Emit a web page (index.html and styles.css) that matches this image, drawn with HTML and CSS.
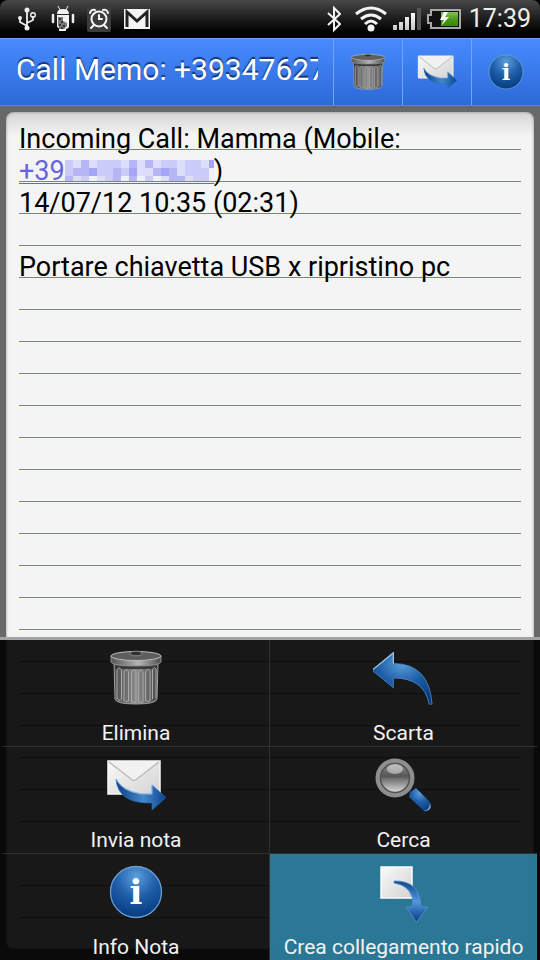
FILE: index.html
```html
<!DOCTYPE html>
<html lang="it">

<head>
  <title>Call Memo</title>
  <meta charset="utf-8">
  <meta name="viewport" content="width=device-width, initial-scale=1">
  <link rel="stylesheet" href="styles.css">
</head>

<body>
  <!-- shared gradients and icons -->
  <svg class="defs" aria-hidden="true">
    <defs>
      <linearGradient id="metal" x1="0" x2="1" y1="0" y2="0">
        <stop offset="0" stop-color="#4a4a4a" />
        <stop offset=".5" stop-color="#8c8c8c" />
        <stop offset="1" stop-color="#4a4a4a" />
      </linearGradient>
      <linearGradient id="rim" x1="0" x2="1" y1="0" y2="0">
        <stop offset="0" stop-color="#555" />
        <stop offset=".55" stop-color="#b5b5b5" />
        <stop offset="1" stop-color="#505050" />
      </linearGradient>
      <linearGradient id="paper" x1="0" x2="1" y1="0" y2="1">
        <stop offset="0" stop-color="#fafafa" />
        <stop offset="1" stop-color="#d2d2d2" />
      </linearGradient>
      <radialGradient id="blue" cx=".5" cy=".2" r=".8">
        <stop offset="0" stop-color="#5a9fdc" />
        <stop offset=".5" stop-color="#1f5ea8" />
        <stop offset="1" stop-color="#053a80" />
      </radialGradient>
      <linearGradient id="swoosh" x1="0" x2="1" y1="0" y2="0">
        <stop offset="0" stop-color="#0b4186" />
        <stop offset=".55" stop-color="#4388cc" />
        <stop offset="1" stop-color="#0b4590" />
      </linearGradient>
      <linearGradient id="drop" x1="0" x2="0" y1="0" y2="1">
        <stop offset="0" stop-color="#10458c" />
        <stop offset=".5" stop-color="#5298da" />
        <stop offset="1" stop-color="#063a85" />
      </linearGradient>
      <linearGradient id="glass" x1="0" x2="0" y1="0" y2="1">
        <stop offset="0" stop-color="#999" />
        <stop offset=".45" stop-color="#555" />
        <stop offset=".55" stop-color="#777" />
        <stop offset="1" stop-color="#f0f0f0" />
      </linearGradient>
      <linearGradient id="bars" x1="0" x2="0" y1="0" y2="1">
        <stop offset="0" stop-color="#fff" />
        <stop offset="1" stop-color="#c4c4c4" />
      </linearGradient>
      <linearGradient id="charge" x1="0" x2="0" y1="0" y2="1">
        <stop offset="0" stop-color="#8cc152" />
        <stop offset=".5" stop-color="#4c9c16" />
        <stop offset="1" stop-color="#3a8408" />
      </linearGradient>
    </defs>

    <symbol id="trash" viewBox="0 0 60 60">
      <path d="M8 15 L9 51 Q10 56 30 56 Q50 56 51 51 L52 15 Z" fill="url(#metal)" stroke="#a2a2a2" stroke-width="1" />
      <path d="M9 15 H51 V21 H9 Z" fill="#3c3c3c" />
      <g fill="none" stroke="#aaa" stroke-width="1">
        <path d="M11 51 V22 Q13 18 15.500 22 V51 Q13 54 11 50" />
        <path d="M18 53 V24 Q20 19 22.500 24 V53 Q20 55 18 52" />
        <path d="M25.500 54 V24 Q27.500 20 30 24 V54 Q28 56 25.500 53" />
        <path d="M32.500 54 V24 Q35 20 37 24 V54 Q35 56 32.500 53" />
        <path d="M39.500 53 V24 Q42 19 44 23 V53 Q42 55 39.500 52" />
        <path d="M46.500 51 V22 Q48 18 50 21 V50" />
      </g>
      <path d="M5 8 V14 Q7 18 30 18 Q53 18 55 14 V8 Z" fill="url(#rim)" stroke="#909090" stroke-width="1" />
      <ellipse cx="30" cy="8" rx="25" ry="4.500" fill="#5e5e5e" stroke="#bdbdbd" stroke-width="1" />
      <ellipse cx="30" cy="5.500" rx="6" ry="2.300" fill="#303030" stroke="#8b8b8b" stroke-width="1" />
    </symbol>

    <symbol id="mail" viewBox="0 0 60 60">
      <path d="M2 6 H54 V39 H2 Z" fill="url(#paper)" stroke="#f6f6f6" stroke-width="1.500" />
      <path d="M3 7 L25 24 Q28 27 31 24 L53 7" fill="#f1f1f1" stroke="#bcbcbc" stroke-width="1.500" />
      <path d="M10 24 Q16 36 35 39 L46 39 V30 L60 42.500 L46 55 V48 Q12 49 10 24 Z" fill="url(#swoosh)" stroke="#2a6cb5" stroke-width=".6" />
      <path d="M10 24 Q16 36 35 39 L46 39 V30" fill="none" stroke="#93bbe2" stroke-width="1" />
    </symbol>

    <symbol id="info" viewBox="0 0 60 60">
      <circle cx="30" cy="30" r="25.500" fill="url(#blue)" stroke="#6c9dd0" stroke-width="1.300" />
      <text x="30" y="42" class="info-letter" text-anchor="middle">i</text>
    </symbol>

    <symbol id="back" viewBox="2 -1 64 60">
      <path d="M1 21 L23 3 V14 Q60 14 63 56 H60 Q55 29 23 29 V39 Z" fill="url(#blue)" stroke="#4f8fca" stroke-width=".8" />
      <path d="M1 21 L23 3 V14" fill="none" stroke="#a4c9e8" stroke-width="1.200" />
    </symbol>

    <symbol id="search" viewBox="1 -1 60 60">
      <path d="M37 36 L43 32 L57 46 Q60 54 52 56 L36 41 Z" fill="url(#blue)" />
      <path d="M50 55 Q57 54 57 47 Q60 55 50 55 Z" fill="#9aa7b8" />
      <circle cx="22" cy="22" r="17" fill="url(#glass)" stroke="#8e8e8e" stroke-width="5" />
      <circle cx="22" cy="22" r="14.500" fill="none" stroke="#505050" stroke-width="1.500" />
      <ellipse cx="22" cy="13" rx="8" ry="5" fill="#fff" opacity=".45" />
    </symbol>

    <symbol id="shortcut" viewBox="2 0 60 60">
      <path d="M9 5 H40 V36 H9 Z" fill="url(#paper)" stroke="#fafafa" stroke-width="1.500" />
      <path d="M22 19 Q48 18 49 45 H56 L44.500 60 L34 45 H41 Q42 24 22 21 Z" fill="url(#drop)" stroke="#5592ce" stroke-width=".8" />
    </symbol>
  </svg>

  <header class="status-bar">
    <div class="status-icons">
      <svg width="20" height="24" viewBox="0 0 20 24" role="img" aria-label="USB">
        <g fill="none" stroke="#eee" stroke-width="1.800">
          <path d="M10 3 V21 M10 19 L3 15 V11 M10 16 L16 13 V9" />
        </g>
        <circle cx="10" cy="3" r="2.500" fill="#eee" />
        <circle cx="10" cy="21" r="2.500" fill="#eee" />
        <circle cx="3" cy="11" r="2" fill="#eee" />
        <circle cx="16" cy="8" r="2.300" fill="none" stroke="#eee" stroke-width="1.400" />
      </svg>
      <svg width="24" height="26" viewBox="0 0 24 26" role="img" aria-label="Debug">
        <path d="M6 8 Q6 3 12 3 Q18 3 18 8 Z M6 9 H18 V21 Q17 23 15 23 V25 H8 V22 Q6 22 6 20 Z" fill="#f2f2f2" />
        <path d="M7 0 L9 4 M17 0 L15 4" stroke="#eee" />
        <path d="M2 9 V16 M22 9 V16" stroke="#eee" stroke-width="2.500" stroke-linecap="round" />
        <path d="M7 11 H12 V15 L16 17 V20 L13 23 H8 V20 H7 Z" fill="#777" />
        <path d="M8 13 h2 M10 16 h2 M8 19 h2 M12 20 h2 M10 22 h2" stroke="#222" stroke-width="1.500" />
      </svg>
      <svg width="24" height="26" viewBox="0 0 24 26" role="img" aria-label="Sveglia">
        <rect width="24" height="26" rx="2" fill="#3c3c3c" />
        <g fill="none" stroke="#f4f4f4" stroke-width="2" stroke-linecap="round">
          <circle cx="12" cy="13" r="7.500" />
          <path d="M12 9 V13 H15 M3 7 Q4 3 8 4 M16 4 Q20 3 21 7 M7 19 L4 22 M17 19 L20 22" />
        </g>
      </svg>
      <svg width="28" height="22" viewBox="0 0 28 22" role="img" aria-label="Gmail">
        <rect x="1" y="1" width="26" height="20" fill="#f4f4f4" />
        <path d="M4 19 V4 L14 13 L24 4 V19" fill="none" stroke="#222" stroke-width="3" />
        <path d="M6 2 H22 L14 9 Z" fill="#f4f4f4" />
      </svg>
    </div>
    <div class="status-system">
      <svg width="14" height="28" viewBox="0 0 14 26" role="img" aria-label="Bluetooth">
        <path d="M1 7 L13 18 L7 24 V2 L13 8 L1 19" fill="none" stroke="#f2f2f2" stroke-width="2" />
      </svg>
      <svg class="wifi" width="32" height="26" viewBox="0 0 32 26" role="img" aria-label="Wi-Fi">
        <g fill="none" stroke="#f4f4f4" stroke-width="3">
          <path d="M1 8 Q16 -4 31 8 M6 13 Q16 5 26 13 M10 18 Q16 12 22 18" />
        </g>
        <circle cx="16" cy="22" r="3.500" fill="#f4f4f4" />
      </svg>
      <svg width="28" height="24" viewBox="0 0 28 24" role="img" aria-label="Segnale">
        <path d="M0 18 h4 v5 h-4 Z M6 15 h4 v8 h-4 Z M12 10 h4 v13 h-4 Z M18 6 h4 v17 h-4 Z" fill="url(#bars)" />
        <path d="M24 1 h4 v22 h-4 Z" fill="#555" />
      </svg>
      <svg width="34" height="20" viewBox="0 0 34 20" role="img" aria-label="Batteria in carica">
        <path d="M4 1 H33 V19 H4 V14 H1 V6 H4 Z" fill="#111" stroke="#a8a8a8" stroke-width="2" />
        <path d="M14 3 H31 V17 H14 Z" fill="url(#charge)" />
        <path d="M17 3 L13 11 H17 L14 17 L22 8 H18 L21 3 Z" fill="#fff" />
      </svg>
      <span class="clock">17:39</span>
    </div>
  </header>

  <div class="action-bar">
    <h1 class="title">Call Memo: +39347627</h1>
    <button class="action" aria-label="Elimina"><svg class="action-icon"><use href="#trash" /></svg></button>
    <button class="action" aria-label="Invia nota"><svg class="action-icon"><use href="#mail" /></svg></button>
    <button class="action" aria-label="Info Nota"><svg class="action-icon"><use href="#info" /></svg></button>
  </div>

  <main class="desk">
    <article class="note">
      <div class="lines">
        <p>Incoming Call: Mamma (Mobile:<br>
          <a class="phone" href="tel:+39">+39<svg class="mosaic" width="149" height="21" viewBox="0 0 149 21" aria-hidden="true">
              <path d="M0 0 H149 V21 H0 Z" fill="#cbcbf8" />
              <path d="M8 0 h8 v8 h-8 Z M24 0 h8 v8 h-8 Z M56 0 h8 v8 h-8 Z M72 0 h8 v8 h-8 Z M88 0 h8 v8 h-8 Z M112 0 h8 v8 h-8 Z M136 0 h8 v8 h-8 Z M72 8 h16 v8 h-16 Z M112 8 h8 v8 h-8 Z M8 16 h8 v5 h-8 Z M32 16 h8 v5 h-8 Z M96 16 h8 v5 h-8 Z M120 16 h8 v5 h-8 Z" fill="#dedefa" />
              <path d="M16 0 h8 v8 h-8 Z M64 0 h8 v8 h-8 Z M80 0 h8 v8 h-8 Z M8 8 h16 v8 h-16 Z M48 8 h8 v8 h-8 Z M88 8 h8 v8 h-8 Z M104 8 h8 v8 h-8 Z M0 16 h8 v5 h-8 Z M48 16 h8 v5 h-8 Z M104 16 h16 v5 h-16 Z M64 16 h8 v5 h-8 Z" fill="#b6b6f6" />
              <path d="M24 8 h8 v8 h-8 Z M64 8 h8 v8 h-8 Z M96 8 h8 v8 h-8 Z M144 0 h5 v8 h-5 Z" fill="#a4a4f8" />
              <path d="M24 16 h8 v5 h-8 Z M56 16 h8 v5 h-8 Z M72 16 h8 v5 h-8 Z M88 16 h8 v5 h-8 Z M144 8 h5 v13 h-5 Z" fill="#f0f0fb" />
            </svg></a>)<br>
          14/07/12 10:35 (02:31)</p>
        <p>Portare chiavetta USB x ripristino pc</p>
      </div>
    </article>
  </main>

  <nav class="menu">
    <button class="item"><svg class="icon"><use href="#trash" /></svg>Elimina</button>
    <button class="item"><svg class="icon"><use href="#back" /></svg>Scarta</button>
    <button class="item"><svg class="icon"><use href="#mail" /></svg>Invia nota</button>
    <button class="item"><svg class="icon"><use href="#search" /></svg>Cerca</button>
    <button class="item"><svg class="icon"><use href="#info" /></svg>Info Nota</button>
    <button class="item selected"><svg class="icon"><use href="#shortcut" /></svg>Crea collegamento rapido</button>
  </nav>
</body>

</html>
```

FILE: styles.css
```css
* {
  box-sizing: border-box;
}

body {
  margin: 0;
  min-height: 100vh;
  position: relative;
  display: flex;
  flex-direction: column;
  background-color: black;
  font-family: Roboto, "Noto Sans", sans-serif;
}

button {
  margin: 0;
  padding: 0;
  border: none;
  background: none;
  color: inherit;
  font: inherit;
}

p {
  margin: 0;
}

.defs {
  position: absolute;
  width: 0;
  height: 0;
}

/* status bar */
.status-bar {
  height: 38px;
  padding: 0 9px 0 17px;
  display: flex;
  justify-content: space-between;
  background: linear-gradient(#484848, #1c1c1c 50%, #000 85%);
  border-radius: 8px 8px 0 0;
  color: #eee;
}

.status-icons {
  display: flex;
  align-items: center;
  gap: 12px;
}

.status-icons svg:first-child {
  margin-right: 2px;
}

.status-system {
  display: flex;
  align-items: center;
  gap: 6px;
}

.wifi {
  margin-left: 8px;
}

.clock {
  margin-left: 2px;
  font-size: 25px;
  line-height: 38px;
}

/* blue title bar */
.action-bar {
  height: 68px;
  display: flex;
  border-top: 1px solid #6fa0ff;
  border-bottom: 1px solid #5b87cf;
  background: linear-gradient(#488aff, #2b69d6);
}

.title {
  flex: 1;
  min-width: 0;
  margin: 0 15px 0 16px;
  overflow: hidden;
  white-space: nowrap;
  font-size: 30px;
  font-weight: 400;
  line-height: 61px;
  color: white;
  text-shadow: 0 -2px 1px rgba(0, 20, 60, .7);
}

.action {
  width: 69px;
  display: flex;
  align-items: center;
  justify-content: center;
  border-left: 1px solid #76a3f2;
}

.action-icon {
  width: 40px;
  height: 40px;
}

.info-letter {
  font-family: "DejaVu Serif", serif;
  font-size: 34px;
  font-weight: bold;
  fill: white;
}

/* the lined sheet */
.desk {
  flex: 1;
  display: flex;
  padding: 6px 6px 11px;
  background-color: #686868;
}

.note {
  flex: 1;
  display: flex;
  padding: 11px 13px 26px;
  border-radius: 8px;
  background: linear-gradient(#d4d4d4, #f4f4f4 24px);
  box-shadow: inset 0 0 3px #888;
}

.lines {
  flex: 1;
  font-size: 27px;
  line-height: 32px;
  color: black;
  background-image: linear-gradient(transparent 26px, #7878d0 26px, #7878d0 27px, transparent 27px);
  background-size: 100% 32px;
}

.lines p + p {
  margin-top: 32px;
}

.phone {
  display: inline-block;
  height: 29px;
  vertical-align: top;
  color: #6464dc;
  text-decoration: none;
  border-bottom: 1px solid #6464dc;
}

.mosaic {
  vertical-align: -1px;
}

.menu {
  position: absolute;
  left: 0;
  right: 0;
  bottom: 0;
  display: grid;
  grid-template-columns: 1fr 1fr;
  padding: 0 3px;
  border-top: 3px solid #a4a4a4;
  background: rgba(0, 0, 0, .9);
  background-clip: padding-box;
}

.item {
  height: 107px;
  padding-top: 8px;
  display: flex;
  flex-direction: column;
  align-items: center;
  gap: 13px;
  border-bottom: 1px solid #303030;
  color: #f2f2f2;
  font-size: 21px;
  line-height: 24px;
}

.item:nth-child(odd) {
  border-right: 1px solid #303030;
}

.item:nth-last-child(-n + 2) {
  height: 106px;
  border-bottom: none;
}

.selected {
  background-color: rgba(45, 131, 164, .9);
}

.icon {
  width: 62px;
  height: 60px;
}
```
